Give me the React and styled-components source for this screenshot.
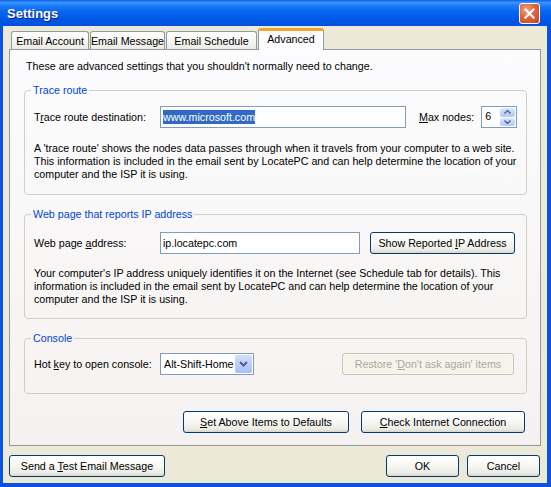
import React from 'react'
import styled, { createGlobalStyle } from 'styled-components'

const GlobalStyle = createGlobalStyle`
  html, body { margin: 0; padding: 0; }
  body {
    font-family: "Liberation Sans", Arial, sans-serif;
    font-size: 10.7px;
    color: #000;
  }
`

const Window = styled.div`
  width: 551px;
  height: 487px;
  display: flex;
  flex-direction: column;
  background: #0a52e0;
  overflow: hidden;
`

const TitleBar = styled.div`
  height: 26px;
  flex: none;
  display: flex;
  align-items: center;
  justify-content: space-between;
  padding: 0 11px 0 7px;
  background: linear-gradient(180deg, #0a5fe8 0%, #3d95ff 10%, #1a7cf6 22%, #0766ee 45%, #0058e6 75%, #0050dc 100%);
`

const Title = styled.span`
  color: #fff;
  font-weight: bold;
  font-size: 13px;
  text-shadow: 1px 1px 0 #0a1c85;
`

const CloseButton = styled.div`
  width: 21px;
  height: 21px;
  box-sizing: border-box;
  border: 1px solid #fff;
  border-radius: 3px;
  background: radial-gradient(circle at 35% 30%, #f2a184 0%, #e2643c 45%, #c4411c 100%);
  display: flex;
  align-items: center;
  justify-content: center;
`

const Frame = styled.div`
  flex: 1;
  display: flex;
  min-width: 0;
  padding: 0 4px 4px 3px;
`

const Body = styled.div`
  flex: 1;
  min-width: 0;
  display: flex;
  flex-direction: column;
  background: #ece9d8;
  padding: 2px 6px 0 6px;
  overflow: hidden;
`

const TabStrip = styled.div`
  height: 21px;
  display: flex;
  align-items: flex-end;
  padding-left: 2px;
  position: relative;
  z-index: 1;
`

const Tab = styled.div`
  box-sizing: border-box;
  width: ${p => p.$w}px;
  height: ${p => (p.$active ? 22 : 18)}px;
  margin: 0 ${p => (p.$active ? 0 : 1)}px ${p => (p.$active ? -1 : 0)}px 0;
  display: flex;
  align-items: center;
  justify-content: center;
  white-space: nowrap;
  border: 1px solid #919b9c;
  border-bottom: none;
  border-top: ${p => (p.$active ? '3px solid #f6a32c' : '1px solid #919b9c')};
  border-radius: 3px 3px 0 0;
  background: ${p => (p.$active ? '#fcfcfe' : 'linear-gradient(180deg, #ffffff 0%, #f7f7f4 50%, #ecebe4 100%)')};
  position: relative;
  z-index: ${p => (p.$active ? 2 : 1)};
  padding-bottom: ${p => (p.$active ? 3 : 0)}px;
`

const Panel = styled.div`
  width: 532px;
  height: 397px;
  box-sizing: border-box;
  border: 1px solid #919b9c;
  background: linear-gradient(180deg, #fcfcfe 0%, #f8f6f5 60%, #f5f1f0 100%);
  padding: 10px 13px 0 14px;
  display: flex;
  flex-direction: column;
`

const Intro = styled.div`
  line-height: 13px;
  margin-left: 2px;
  white-space: nowrap;
`

const Group = styled.fieldset`
  margin: ${p => p.$top}px 0 0 0;
  border: 1px solid #d0d0bf;
  border-radius: 4px;
  padding: ${p => p.$pt}px 12px ${p => p.$pb}px 9px;
  min-width: 0;
`

const Legend = styled.legend`
  color: #0046d5;
  line-height: 13px;
  padding: 0 2px;
  margin-left: -3px;
`

const Row = styled.div`
  display: flex;
  align-items: center;
  height: 22px;
`

const Label = styled.div`
  width: 126px;
  flex: none;
  white-space: nowrap;
`

const Key = styled.span`
  text-decoration: underline;
`

const TextBox = styled.div`
  box-sizing: border-box;
  width: ${p => p.$w}px;
  height: 22px;
  flex: none;
  border: 1px solid #7f9db9;
  background: #fff;
  display: flex;
  align-items: center;
  padding-left: 2px;
  white-space: nowrap;
`

const Selected = styled.span`
  background: #316ac5;
  color: #fff;
  line-height: 14px;
`

const InlineLabel = styled.div`
  margin-left: ${p => p.$ml}px;
  margin-right: 7px;
  white-space: nowrap;
`

const Spinner = styled.div`
  box-sizing: border-box;
  width: 36px;
  height: 22px;
  flex: none;
  border: 1px solid #7f9db9;
  background: #fff;
  display: flex;
  justify-content: space-between;
  padding: 1px;
`

const SpinValue = styled.div`
  padding: 1px 0 0 2px;
  line-height: 14px;
`

const SpinButtons = styled.div`
  width: 15px;
  display: flex;
  flex-direction: column;
  gap: 1px;
`

const SpinHalf = styled.div`
  flex: 1;
  border-radius: 2px;
  background: linear-gradient(180deg, #dbe6fd 0%, #c1d3fb 60%, #b4c8f6 100%);
  display: flex;
  align-items: center;
  justify-content: center;
`

const Combo = styled.div`
  box-sizing: border-box;
  width: 94px;
  height: 22px;
  flex: none;
  border: 1px solid #7f9db9;
  background: #fff;
  display: flex;
  align-items: center;
  justify-content: space-between;
  padding: 1px 1px 1px 3px;
  white-space: nowrap;
`

const DropButton = styled.div`
  width: 17px;
  height: 18px;
  flex: none;
  border-radius: 2px;
  background: linear-gradient(180deg, #d3e0fd 0%, #b9cdfb 55%, #a9c0f5 100%);
  display: flex;
  align-items: center;
  justify-content: center;
`

const Note = styled.div`
  margin-top: ${p => p.$mt}px;
  line-height: 13px;
  white-space: nowrap;
`

const Button = styled.button`
  box-sizing: border-box;
  width: ${p => p.$w}px;
  height: 22px;
  margin-left: ${p => p.$ml || 0}px;
  padding: 0;
  border: 1px solid ${p => (p.disabled ? '#c9c7ba' : '#003c74')};
  border-radius: 3px;
  background: ${p => (p.disabled
    ? '#f5f4ea'
    : 'linear-gradient(180deg, #ffffff 0%, #f8f8f5 45%, #ecebe5 85%, #d8d4ca 100%)')};
  color: ${p => (p.disabled ? '#aca899' : '#000')};
  font: 10.7px "Liberation Sans", Arial, sans-serif;
  white-space: nowrap;
  flex: none;
`

const Spacer = styled.div`
  flex: 1;
`

const ActionRow = styled.div`
  display: flex;
  justify-content: flex-end;
  margin-top: 17px;
  padding-right: 2px;
`

const Footer = styled.div`
  display: flex;
  margin-top: 9px;
  padding-right: 1px;
`

const Up = () => (
  <svg width="7" height="4" viewBox="0 0 7 4">
    <path d="M0.5 3.5 L3.5 0.5 L6.5 3.5" fill="none" stroke="#4d6185" strokeWidth="1.4" />
  </svg>
)

const Down = () => (
  <svg width="7" height="4" viewBox="0 0 7 4">
    <path d="M0.5 0.5 L3.5 3.5 L6.5 0.5" fill="none" stroke="#4d6185" strokeWidth="1.4" />
  </svg>
)

const Chevron = () => (
  <svg width="9" height="6" viewBox="0 0 9 6">
    <path d="M1 1 L4.5 4.5 L8 1" fill="none" stroke="#4d6185" strokeWidth="2" />
  </svg>
)

const CloseX = () => (
  <svg width="11" height="11" viewBox="0 0 11 11">
    <path d="M1.5 1.5 L9.5 9.5 M9.5 1.5 L1.5 9.5" stroke="#fff" strokeWidth="2.2" strokeLinecap="square" />
  </svg>
)

const tabs = [
  { name: 'Email Account', w: 78 },
  { name: 'Email Message', w: 75 },
  { name: 'Email Schedule', w: 91 },
  { name: 'Advanced', w: 66, active: true },
]

const App = () => {
  return (
    <Window>
      <GlobalStyle />
      <TitleBar>
        <Title>Settings</Title>
        <CloseButton><CloseX /></CloseButton>
      </TitleBar>
      <Frame>
        <Body>
          <TabStrip>
            {tabs.map(t => (
              <Tab key={t.name} $w={t.w} $active={t.active}>{t.name}</Tab>
            ))}
          </TabStrip>
          <Panel>
            <Intro>These are advanced settings that you shouldn't normally need to change.</Intro>

            <Group $top={11} $pt={9} $pb={13}>
              <Legend>Trace route</Legend>
              <Row>
                <Label>T<Key>r</Key>ace route destination:</Label>
                <TextBox $w={246}><Selected>www.microsoft.com</Selected></TextBox>
                <InlineLabel $ml={13}><Key>M</Key>ax nodes:</InlineLabel>
                <Spinner>
                  <SpinValue>6</SpinValue>
                  <SpinButtons>
                    <SpinHalf><Up /></SpinHalf>
                    <SpinHalf><Down /></SpinHalf>
                  </SpinButtons>
                </Spinner>
              </Row>
              <Note $mt={14}>
                A 'trace route' shows the nodes data passes through when it travels from your computer to a web site.<br />
                This information is included in the email sent by LocatePC and can help determine the location of your<br />
                computer and the ISP it is using.
              </Note>
            </Group>

            <Group $top={13} $pt={11} $pb={12}>
              <Legend>Web page that reports IP address</Legend>
              <Row>
                <Label>Web page <Key>a</Key>ddress:</Label>
                <TextBox $w={200}>ip.locatepc.com</TextBox>
                <Button $w={145} $ml={10}>Show Reported <Key>I</Key>P Address</Button>
              </Row>
              <Note $mt={13}>
                Your computer's IP address uniquely identifies it on the Internet (see Schedule tab for details). This<br />
                information is included in the email sent by LocatePC and can help determine the location of your<br />
                computer and the ISP it is using.
              </Note>
            </Group>

            <Group $top={13} $pt={8} $pb={18}>
              <Legend>Console</Legend>
              <Row>
                <Label>Hot <Key>k</Key>ey to open console:</Label>
                <Combo>
                  <span>Alt-Shift-Home</span>
                  <DropButton><Chevron /></DropButton>
                </Combo>
                <Spacer />
                <Button $w={172} disabled>Restore '<Key>D</Key>on't ask again' items</Button>
              </Row>
            </Group>

            <ActionRow>
              <Button $w={166}><Key>S</Key>et Above Items to Defaults</Button>
              <Button $w={164} $ml={12}><Key>C</Key>heck Internet Connection</Button>
            </ActionRow>
          </Panel>
          <Footer>
            <Button $w={156}>Send a <Key>T</Key>est Email Message</Button>
            <Spacer />
            <Button $w={73}>OK</Button>
            <Button $w={73} $ml={8}>Cancel</Button>
          </Footer>
        </Body>
      </Frame>
    </Window>
  )
}

export default App
